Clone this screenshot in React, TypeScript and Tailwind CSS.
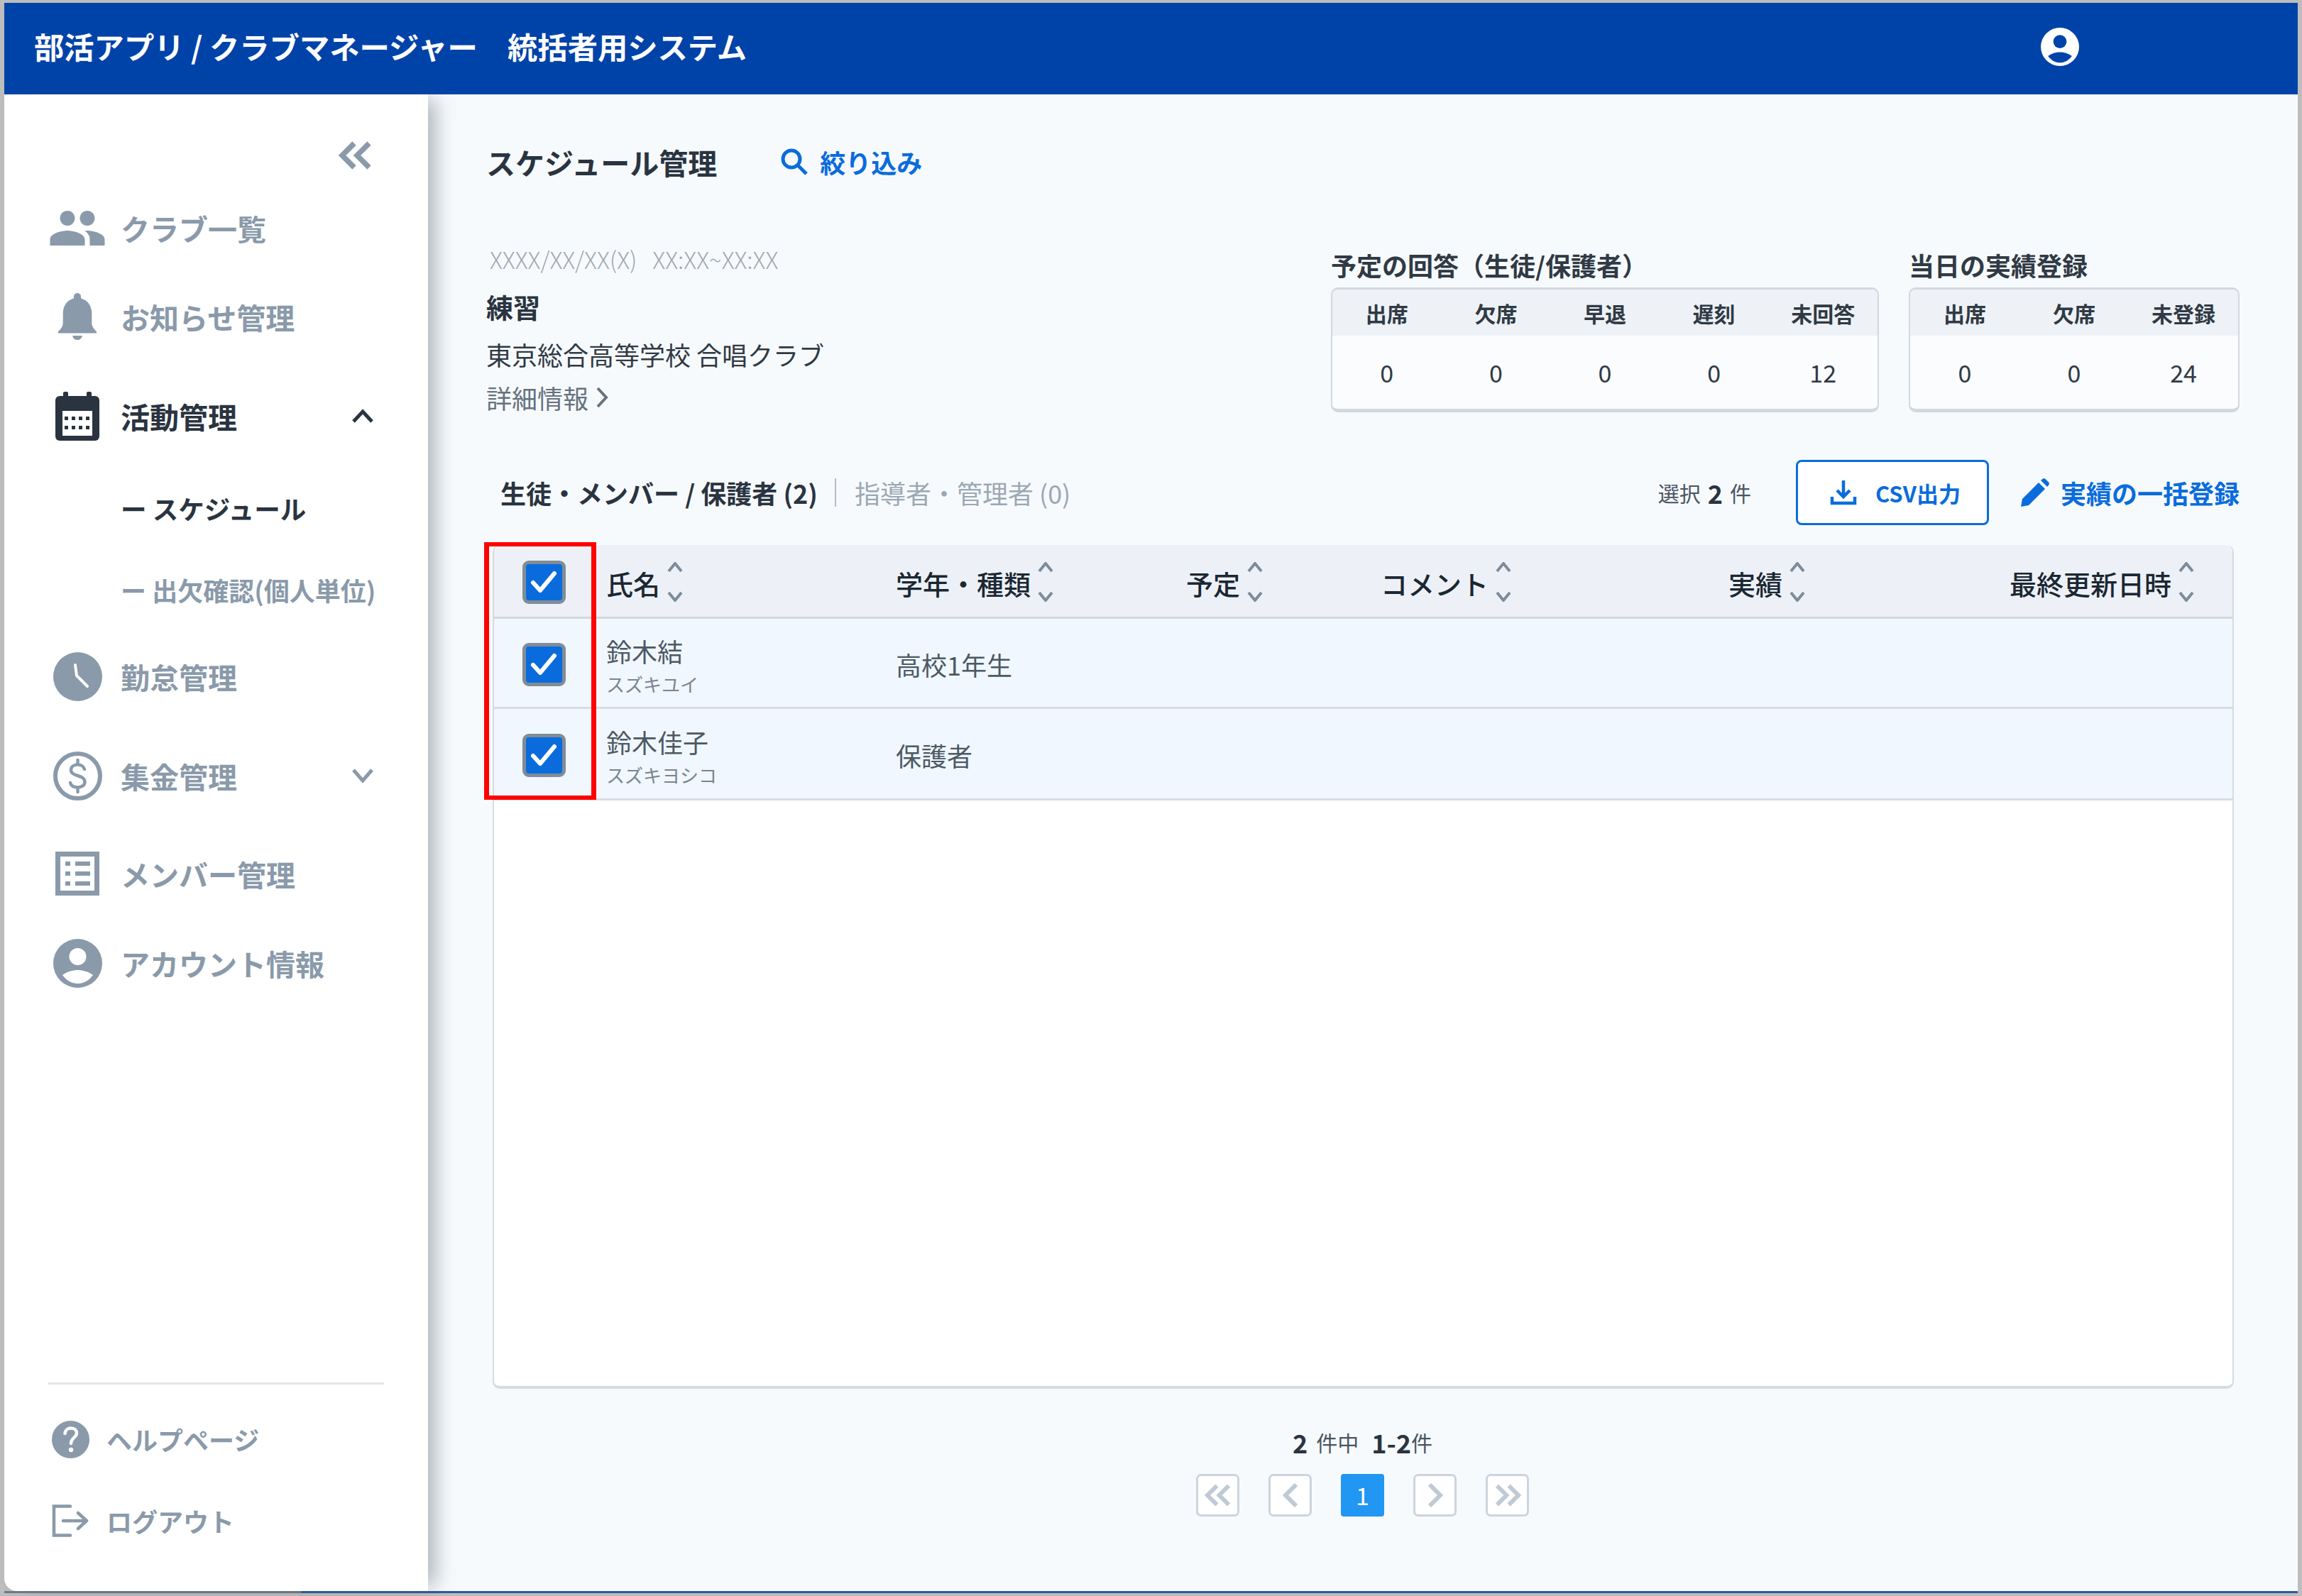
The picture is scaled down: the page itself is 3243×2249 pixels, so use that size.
const NAV_TEXT = "text-[41px] font-bold leading-none";

function AccountIcon({ bg, fg, className }: { bg: string; fg: string; className: string }) {
  return (
    <svg viewBox="0 0 69 69" className={className}>
      <circle cx="34.5" cy="34.5" r="34.5" fill={bg} />
      <circle cx="34.5" cy="25" r="12" fill={fg} />
      <path d="M13 51C20 46 27 44 34.5 44C42 44 49 46 56 51C50 59 43 63 34.5 63C26 63 19 59 13 51Z" fill={fg} />
    </svg>
  );
}

function GroupIcon() {
  return (
    <svg viewBox="1 5 22 14" className="h-[49px] w-[78px]" fill="#8a9aaa">
      <path d="M16 11c1.66 0 2.99-1.34 2.99-3S17.66 5 16 5c-1.66 0-3 1.34-3 3s1.34 3 3 3zm-8 0c1.66 0 2.99-1.34 2.99-3S9.66 5 8 5C6.34 5 5 6.34 5 8s1.34 3 3 3zm0 2c-2.33 0-7 1.17-7 3.5V19h14v-2.5c0-2.33-4.67-3.5-7-3.5zm8 0c-.29 0-.62.02-.97.05 1.16.84 1.97 1.97 1.97 3.45V19h6v-2.5c0-2.33-4.67-3.5-7-3.5z" />
    </svg>
  );
}

function BellIcon() {
  return (
    <svg viewBox="4 2.5 16 19.5" className="h-[66px] w-[56px]" fill="#8a9aaa">
      <path d="M12 2.5c-.9 0-1.5.7-1.5 1.5v.7C7.6 5.4 6 8 6 11v4c0 1.5-1 2.6-2 3.5v.7h16v-.7c-1-.9-2-2-2-3.5v-4c0-3-1.6-5.6-4.5-6.3V4c0-.8-.6-1.5-1.5-1.5z" />
      <path d="M10 20.2c.2 1.2 1 1.8 2 1.8s1.8-.6 2-1.8z" />
    </svg>
  );
}

function CalendarIcon() {
  return (
    <svg viewBox="0 0 62 69" className="h-[69px] w-[62px]">
      <rect x="0" y="6" width="62" height="63" rx="6" fill="#2a3440" />
      <rect x="11" y="0" width="7" height="12" rx="2" fill="#2a3440" />
      <rect x="44" y="0" width="7" height="12" rx="2" fill="#2a3440" />
      <rect x="10" y="27" width="42" height="35" fill="#ffffff" />
      {[14, 24, 34, 44].map((x) => (
        <g key={x} fill="#2a3440">
          <rect x={x - 1} y="35" width="5" height="5" />
          <rect x={x - 1} y="48" width="5" height="5" />
        </g>
      ))}
    </svg>
  );
}

function ClockIcon() {
  return (
    <svg viewBox="0 0 69 69" className="h-[69px] w-[69px]">
      <circle cx="34.5" cy="34.5" r="34.5" fill="#8a9aaa" />
      <path d="M31 18L33 33L48 48" fill="none" stroke="#ffffff" strokeWidth="4" strokeLinecap="round" strokeLinejoin="round" />
    </svg>
  );
}

function DollarIcon() {
  return (
    <svg viewBox="0 0 69 69" className="h-[69px] w-[69px]" fill="none" stroke="#8a9aaa">
      <circle cx="34.5" cy="34.5" r="31.5" strokeWidth="6" />
      <path d="M44 25C43 21 39 18.5 34.5 18.5C29 18.5 25 21.5 25 26C25 36 44.5 32 44.5 43C44.5 47.5 40 50.5 34.5 50.5C29 50.5 25 48 24 44M34.5 12V18.5M34.5 50.5V57" strokeWidth="4.5" strokeLinecap="round" />
    </svg>
  );
}

function ListIcon() {
  return (
    <svg viewBox="0 0 62 62" className="h-[62px] w-[62px]" fill="#8a9aaa">
      <rect x="3.5" y="3.5" width="55" height="55" fill="none" stroke="#8a9aaa" strokeWidth="7" />
      {[14, 28, 42].map((y) => (
        <g key={y}>
          <rect x="14" y={y} width="7" height="6" />
          <rect x="28" y={y} width="21" height="6" />
        </g>
      ))}
    </svg>
  );
}

function HelpIcon() {
  return (
    <svg viewBox="0 0 53 53" className="h-[53px] w-[53px]">
      <circle cx="26.5" cy="26.5" r="26.5" fill="#8a9aaa" />
      <path d="M18.5 18C19 13 22.5 10.5 27 10.5C32 10.5 35 13.5 35 17.5C35 23.5 27 24 27 32" fill="none" stroke="#ffffff" strokeWidth="4.5" strokeLinecap="round" />
      <circle cx="27" cy="41" r="3.2" fill="#ffffff" />
    </svg>
  );
}

function LogoutIcon() {
  return (
    <svg viewBox="0 0 52 46" className="h-[46px] w-[52px]" fill="none" stroke="#8a9aaa" strokeWidth="4.5">
      <path d="M26 2.5H3V43.5H26" strokeLinecap="round" />
      <path d="M16 23H48M37 12L49 23L37 34" strokeLinecap="round" strokeLinejoin="round" />
    </svg>
  );
}

function DoubleLeft({ className, stroke, width }: { className: string; stroke: string; width: number }) {
  return (
    <svg viewBox="0 0 48 40" className={className} fill="none" stroke={stroke} strokeWidth={width}>
      <path d="M22 3L5 20L22 37M43 3L26 20L43 37" strokeLinejoin="miter" />
    </svg>
  );
}

function SortIcon() {
  return (
    <svg viewBox="0 0 22 56" className="ml-[10px] h-[56px] w-[22px] shrink-0" fill="none" stroke="#7d8b9a" strokeWidth="4">
      <path d="M2 13L11 2L20 13M2 43L11 54L20 43" />
    </svg>
  );
}

function Checkbox() {
  return (
    <div className="flex h-[61px] w-[61px] items-center justify-center rounded-[9px] border-[5px] border-[#808c98] bg-[#0a6cdc]">
      <svg viewBox="0 0 40 40" className="h-[40px] w-[40px]" fill="none" stroke="#ffffff" strokeWidth="6">
        <path d="M5 21L15 32L35 8" strokeLinecap="round" strokeLinejoin="round" />
      </svg>
    </div>
  );
}

function SummaryCard({ title, cols, className }: { title: string; cols: [string, string][]; className: string }) {
  return (
    <div className="flex flex-col">
      <div className="mt-[12px] flex h-[46px] items-center text-[36px] font-bold leading-none text-[#303a45]">{title}</div>
      <div className={`mt-[9px] h-[176px] overflow-hidden rounded-[10px] border-x-2 border-t-[3px] border-b-[5px] border-[#d2d8de] bg-[#fafcfe] ${className}`}>
        <div className="flex h-[65px] items-center bg-[#eef2f7]">
          {cols.map(([label]) => (
            <div key={label} className="flex-1 text-center text-[30px] font-bold leading-none text-[#303a45]">{label}</div>
          ))}
        </div>
        <div className="flex h-[103px] items-center">
          {cols.map(([label, value]) => (
            <div key={label} className="flex-1 text-center text-[34px] leading-none text-[#303a45]">{value}</div>
          ))}
        </div>
      </div>
    </div>
  );
}

const HEAD_COLS = ["氏名", "学年・種類", "予定", "コメント", "実績", "最終更新日時"];
const GRID = "grid grid-cols-[158px_408px_409px_274px_490px_396px_1fr]";

function PageButton({ children }: { children: React.ReactNode }) {
  return (
    <div className="flex h-[60px] w-[61px] items-center justify-center rounded-[7px] border-[3px] border-[#ccd4dd] bg-white">{children}</div>
  );
}

export default function App() {
  return (
    <div className="flex h-[2249px] w-[3243px] flex-col bg-[#bdbdbd] pl-[6px] pr-[6px] pt-[4px] font-['Noto_Sans_CJK_JP','Noto_Sans',sans-serif]">
      <header className="flex h-[129px] shrink-0 items-center justify-between bg-[#0043a8] pb-[6px] pl-[42px] pr-[308px]">
        <span className="text-[42.3px] font-bold leading-none text-white">部活アプリ / クラブマネージャー　統括者用システム</span>
        <AccountIcon bg="#ffffff" fg="#0043a8" className="h-[54px] w-[54px]" />
      </header>

      <div className="flex h-[2109px] shrink-0">
        <aside className="relative z-10 flex w-[597px] shrink-0 flex-col rounded-bl-[18px] bg-white shadow-[18px_0_28px_-8px_rgba(70,80,90,0.42)]">
          <div className="flex h-[106px] items-end justify-end pr-[78px]">
            <DoubleLeft className="h-[40px] w-[48px]" stroke="#8a9aaa" width={7.5} />
          </div>

          <div className="mt-[47px] flex h-[70px] items-center">
            <div className="ml-[64px] flex w-[78px] justify-center"><GroupIcon /></div>
            <span className={`ml-[22px] text-[#8a9aaa] ${NAV_TEXT}`}>クラブ一覧</span>
          </div>
          <div className="mt-[55px] flex h-[70px] items-center">
            <div className="ml-[64px] flex w-[78px] justify-center"><BellIcon /></div>
            <span className={`ml-[22px] text-[#8a9aaa] ${NAV_TEXT}`}>お知らせ管理</span>
          </div>
          <div className="mt-[70px] flex h-[70px] items-center">
            <div className="ml-[64px] flex w-[78px] justify-center"><CalendarIcon /></div>
            <span className={`ml-[22px] text-[#2a3440] ${NAV_TEXT}`}>活動管理</span>
            <svg viewBox="0 0 30 22" className="ml-auto mr-[77px] h-[22px] w-[30px]" fill="none" stroke="#2a3440" strokeWidth="5">
              <path d="M2 19L15 5L28 19" />
            </svg>
          </div>
          <div className="mt-[66px] flex h-[60px] items-center pl-[164px] text-[36.5px] font-bold leading-none text-[#2a3440]">ー スケジュール</div>
          <div className="mt-[54px] flex h-[60px] items-center pl-[164px] text-[36px] font-bold leading-none text-[#8a9aaa]">ー 出欠確認(個人単位)</div>
          <div className="mt-[57px] flex h-[70px] items-center">
            <div className="ml-[64px] flex w-[78px] justify-center"><ClockIcon /></div>
            <span className={`ml-[22px] text-[#8a9aaa] ${NAV_TEXT}`}>勤怠管理</span>
          </div>
          <div className="mt-[70px] flex h-[70px] items-center">
            <div className="ml-[64px] flex w-[78px] justify-center"><DollarIcon /></div>
            <span className={`ml-[22px] text-[#8a9aaa] ${NAV_TEXT}`}>集金管理</span>
            <svg viewBox="0 0 30 22" className="ml-auto mr-[77px] h-[22px] w-[30px]" fill="none" stroke="#8a9aaa" strokeWidth="5">
              <path d="M2 3L15 18L28 3" />
            </svg>
          </div>
          <div className="mt-[68px] flex h-[70px] items-center">
            <div className="ml-[64px] flex w-[78px] justify-center"><ListIcon /></div>
            <span className={`ml-[22px] text-[#8a9aaa] ${NAV_TEXT}`}>メンバー管理</span>
          </div>
          <div className="mt-[56px] flex h-[70px] items-center">
            <div className="ml-[64px] flex w-[78px] justify-center"><AccountIcon bg="#8a9aaa" fg="#ffffff" className="h-[69px] w-[69px]" /></div>
            <span className={`ml-[22px] text-[#8a9aaa] ${NAV_TEXT}`}>アカウント情報</span>
          </div>

          <div className="mt-auto ml-[62px] mr-[62px] h-[3px] bg-[#e3e6e9]" />
          <div className="mt-[52px] flex h-[50px] items-center">
            <div className="ml-[67px]"><HelpIcon /></div>
            <span className="ml-[24px] text-[36px] font-bold leading-none text-[#8a9aaa]">ヘルプページ</span>
          </div>
          <div className="mb-[74px] mt-[65px] flex h-[50px] items-center">
            <div className="ml-[67px]"><LogoutIcon /></div>
            <span className="ml-[25px] text-[36px] font-bold leading-none text-[#8a9aaa]">ログアウト</span>
          </div>
        </aside>

        <main className="flex min-w-0 flex-1 flex-col bg-[#f7fafd] pl-[82px] pr-[82px] pt-[70px]">
          <div className="flex h-[50px] items-center">
            <h1 className="text-[41px] font-bold leading-none text-[#2a3440]">スケジュール管理</h1>
            <div className="ml-[90px] flex items-center">
              <svg viewBox="0 0 38 38" className="h-[38px] w-[38px]" fill="none" stroke="#0a6cdc" strokeWidth="5">
                <circle cx="15" cy="15" r="12" />
                <path d="M24 24L36 36" />
              </svg>
              <span className="ml-[17px] text-[36px] font-bold leading-none text-[#0a6cdc]">絞り込み</span>
            </div>
          </div>

          <div className="mt-[85px] flex justify-between">
            <div className="flex flex-col">
              <div className="flex h-[54px] items-center pl-[5px] text-[33px] font-light leading-none text-[#a3a8ad]">XXXX/XX/XX(X)&nbsp;&nbsp;&nbsp;XX:XX~XX:XX</div>
              <div className="mt-[15px] flex h-[50px] items-center text-[38px] font-bold leading-none text-[#2a3440]">練習</div>
              <div className="mt-[19px] flex h-[46px] items-center text-[36px] leading-none text-[#303a45]">東京総合高等学校 合唱クラブ</div>
              <div className="mt-[15px] flex h-[46px] items-center text-[36px] leading-none text-[#66727d]">
                詳細情報
                <svg viewBox="0 0 20 32" className="ml-[8px] h-[32px] w-[22px]" fill="none" stroke="#66727d" strokeWidth="4">
                  <path d="M4 3L16 16L4 29" />
                </svg>
              </div>
            </div>
            <div className="flex gap-[42px]">
              <SummaryCard
                title="予定の回答（生徒/保護者）"
                className="w-[772px]"
                cols={[["出席", "0"], ["欠席", "0"], ["早退", "0"], ["遅刻", "0"], ["未回答", "12"]]}
              />
              <SummaryCard
                title="当日の実績登録"
                className="w-[466px]"
                cols={[["出席", "0"], ["欠席", "0"], ["未登録", "24"]]}
              />
            </div>
          </div>

          <div className="mt-[65px] flex h-[92px] items-center">
            <span className="ml-[20px] text-[36px] font-bold leading-none text-[#2a3440]">生徒・メンバー / 保護者 (2)</span>
            <span className="ml-[24px] h-[40px] w-[2px] bg-[#b4bcc4]" />
            <span className="ml-[26px] text-[36px] leading-none text-[#9ca8b4]">指導者・管理者 (0)</span>
            <div className="ml-auto flex items-center">
              <span className="flex items-center text-[30px] leading-none text-[#4a5561]">
                選択
                <b className="mx-[10px] text-[36px] text-[#2a3440]">2</b>
                件
              </span>
              <div className="ml-[63px] flex h-[92px] w-[272px] items-center rounded-[8px] border-[3px] border-[#0a6cdc] bg-white pl-[45px]">
                <svg viewBox="0 0 38 36" className="h-[36px] w-[38px]" fill="none" stroke="#0a6cdc" strokeWidth="4.5">
                  <path d="M19 1V23M10 15L19 24L28 15M3 24V33H35V24" />
                </svg>
                <span className="ml-[26px] text-[31px] font-bold leading-none text-[#0a6cdc]">CSV出力</span>
              </div>
              <svg viewBox="0 0 40 40" className="ml-[45px] h-[40px] w-[40px]" fill="#0a6cdc">
                <path d="M0 40L2 29L25 6L34 15L11 38Z" />
                <path d="M28 3L31 0.5C32 0 33 0 34 0.5L39.5 6C40 7 40 8 39.5 9L37 12Z" />
              </svg>
              <span className="ml-[16px] text-[36px] font-bold leading-none text-[#0a6cdc]">実績の一括登録</span>
            </div>
          </div>

          <div className="relative ml-[9px] mr-[8px] mt-[28px] h-[1189px] rounded-[10px] border-x-[2px] border-b-[4px] border-[#d6dbe1] bg-white">
            <div className={`${GRID} h-[104px] items-center rounded-t-[10px] border-b-[3px] border-[#d2d8de] bg-[#edf1f7] pt-[3px]`}>
              <div className="flex justify-center pr-[18px]"><Checkbox /></div>
              {HEAD_COLS.map((label) => (
                <div key={label} className="flex items-center">
                  <span className="pt-[4px] text-[38px] font-medium leading-none text-[#1b2733]">{label}</span>
                  <SortIcon />
                </div>
              ))}
            </div>
            <div className={`${GRID} h-[127px] items-center border-b-[3px] border-[#d7dde3] bg-[#f0f7fe] pt-[4px]`}>
              <div className="flex justify-center pr-[18px]"><Checkbox /></div>
              <div className="flex flex-col pt-[4px]">
                <span className="text-[36px] leading-none text-[#4d5965]">鈴木結</span>
                <span className="mt-[16px] text-[26px] leading-none text-[#7a8591]">スズキユイ</span>
              </div>
              <span className="text-[36px] leading-none text-[#4d5965]">高校1年生</span>
            </div>
            <div className={`${GRID} h-[129px] items-center border-b-[3px] border-[#d7dde3] bg-[#f0f7fe] pt-[4px]`}>
              <div className="flex justify-center pr-[18px]"><Checkbox /></div>
              <div className="flex flex-col pt-[4px]">
                <span className="text-[36px] leading-none text-[#4d5965]">鈴木佳子</span>
                <span className="mt-[16px] text-[26px] leading-none text-[#7a8591]">スズキヨシコ</span>
              </div>
              <span className="text-[36px] leading-none text-[#4d5965]">保護者</span>
            </div>
            <div className="absolute left-[-14px] top-[-4px] h-[363px] w-[158px] border-x-[7px] border-y-[6px] border-[#ff0000]" />
          </div>

          <div className="mt-[52px] flex h-[46px] items-center justify-center pr-[1px] text-[#4a5561]">
            <b className="text-[36px] leading-none text-[#2a3440]">2</b>
            <span className="ml-[12px] text-[30px] leading-none">件中</span>
            <b className="ml-[18px] text-[36px] leading-none text-[#2a3440]">1-2</b>
            <span className="text-[30px] leading-none">件</span>
          </div>
          <div className="mt-[22px] flex justify-center gap-[41px] pr-[1px]">
            <PageButton>
              <DoubleLeft className="h-[34px] w-[38px]" stroke="#bfcad5" width={7.5} />
            </PageButton>
            <PageButton>
              <svg viewBox="0 0 22 34" className="h-[34px] w-[22px]" fill="none" stroke="#bfcad5" strokeWidth="6"><path d="M19 2L4 17L19 32" /></svg>
            </PageButton>
            <div className="flex h-[60px] w-[61px] items-center justify-center rounded-[4px] bg-[#2196f3] text-[34px] leading-none text-white">1</div>
            <PageButton>
              <svg viewBox="0 0 22 34" className="h-[34px] w-[22px]" fill="none" stroke="#bfcad5" strokeWidth="6"><path d="M3 2L18 17L3 32" /></svg>
            </PageButton>
            <PageButton>
              <DoubleLeft className="h-[34px] w-[38px] rotate-180" stroke="#bfcad5" width={7.5} />
            </PageButton>
          </div>
        </main>
      </div>
      <div className="flex h-[3px] shrink-0">
        <div className="w-[418px] bg-[#6d7b8a]" />
        <div className="flex-1 bg-[#2c5aa6]" />
      </div>
    </div>
  );
}
